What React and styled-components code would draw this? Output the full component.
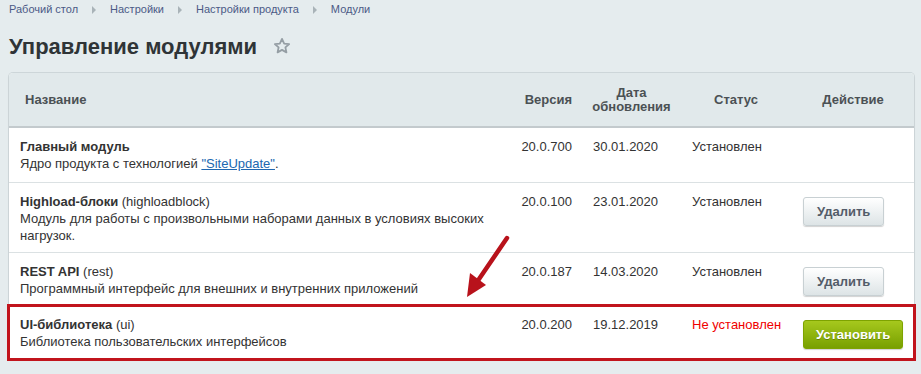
import React from 'react';
import styled, { createGlobalStyle } from 'styled-components';

const GlobalStyle = createGlobalStyle`
  html, body {
    margin: 0;
    padding: 0;
    background: #e5ecee;
    font-family: "Liberation Sans", Arial, sans-serif;
    overflow: hidden;
  }
`

const Page = styled.div`
  position: relative;
  padding: 3px 7px 0 9px;
  height: 374px;
  box-sizing: border-box;
`

const Breadcrumbs = styled.div`
  display: flex;
  align-items: center;
  font-size: 11px;
  line-height: 13px;
  color: #4b5a86;
`

const Sep = styled.span`
  width: 0;
  height: 0;
  margin: 0 14px 0 14px;
  border-top: 4px solid transparent;
  border-bottom: 4px solid transparent;
  border-left: 4px solid #a9b3b8;
`

const TitleRow = styled.div`
  display: flex;
  align-items: center;
  margin-top: 16px;
  height: 30px;
`

const Title = styled.h1`
  margin: 0;
  font-size: 22px;
  font-weight: bold;
  color: #2f3437;
  line-height: 30px;
`

const Star = styled.svg`
  margin-left: 16px;
  margin-top: -2px;
`

const Panel = styled.div`
  margin-top: 11px;
  width: 905px;
  background: #fff;
  border-radius: 4px 4px 0 0;
  box-shadow: 0 0 0 1px rgba(190, 200, 204, 0.6), 0 1px 2px rgba(0, 0, 0, 0.08);
`

const Table = styled.table`
  width: 905px;
  border-collapse: collapse;
  table-layout: fixed;
  font-size: 13px;
  color: #333;
`

const Head = styled.th`
  height: 53px;
  padding: 0 ${p => p.$pad || 0}px;
  background: #e1e9eb;
  border-bottom: 2px solid #c3cacd;
  font-weight: bold;
  color: #4b5154;
  line-height: 14px;
  text-align: ${p => p.$align || 'center'};
  vertical-align: middle;
  &:first-child { border-top-left-radius: 4px; }
  &:last-child { border-top-right-radius: 4px; }
`

const Row = styled.tr`
  border-bottom: 1px solid #dbe1e3;
  ${p => p.$marked && `
    outline: 3px solid #c1141c;
    outline-offset: -1px;
  `}
`

const Cell = styled.td`
  height: ${p => p.$tall ? 36 : 0}px;
  padding: 10px ${p => p.$pr || 10}px 8px ${p => p.$pl || 10}px;
  vertical-align: top;
  line-height: 17px;
  text-align: ${p => p.$align || 'left'};
  color: ${p => p.$red ? '#f00000' : '#333'};
`

const Name = styled.b`
  color: #333;
`

const Link = styled.a`
  color: #2067b0;
  text-decoration: underline;
`

const Button = styled.button`
  margin-top: 4px;
  height: 29px;
  padding: 0 ${p => (p.$green ? 12 : 13)}px;
  font-family: inherit;
  font-size: 13px;
  font-weight: bold;
  border-radius: 3px;
  cursor: pointer;
  color: ${p => (p.$green ? '#fff' : '#535c69')};
  text-shadow: ${p => (p.$green ? '0 1px rgba(0,0,0,0.25)' : 'none')};
  border: 1px solid ${p => (p.$green ? '#7ea300' : '#c8d0d3')};
  background: ${p => (p.$green
    ? 'linear-gradient(#a6c81d, #78a000)'
    : 'linear-gradient(#ffffff, #dde4e6)')};
  box-shadow: 0 1px 1px rgba(0, 0, 0, 0.18);
`

const Arrow = styled.svg`
  position: absolute;
  left: 0;
  top: 0;
  pointer-events: none;
`

const modules = [
  {
    name: 'Главный модуль',
    desc: <>Ядро продукта с технологией <Link href="#">"SiteUpdate"</Link>.</>,
    version: '20.0.700',
    date: '30.01.2020',
    status: 'Установлен',
    tall: true,
  },
  {
    name: 'Highload-блоки',
    id: 'highloadblock',
    desc: 'Модуль для работы с произвольными наборами данных в условиях высоких нагрузок.',
    version: '20.0.100',
    date: '23.01.2020',
    status: 'Установлен',
    action: 'remove',
  },
  {
    name: 'REST API',
    id: 'rest',
    desc: 'Программный интерфейс для внешних и внутренних приложений',
    version: '20.0.187',
    date: '14.03.2020',
    status: 'Установлен',
    action: 'remove',
  },
  {
    name: 'UI-библиотека',
    id: 'ui',
    desc: 'Библиотека пользовательских интерфейсов',
    version: '20.0.200',
    date: '19.12.2019',
    status: 'Не установлен',
    action: 'install',
    marked: true,
  },
];

export default function App() {
  return (
    <Page>
      <GlobalStyle />
      <Breadcrumbs>
        <span>Рабочий стол</span>
        <Sep />
        <span>Настройки</span>
        <Sep />
        <span>Настройки продукта</span>
        <Sep />
        <span>Модули</span>
      </Breadcrumbs>
      <TitleRow>
        <Title>Управление модулями</Title>
        <Star width="18" height="18" viewBox="0 0 24 24">
          <path
            d="M12 2.5l2.9 6.2 6.6.7-5 4.5 1.4 6.6L12 17.2l-5.9 3.3 1.4-6.6-5-4.5 6.6-.7z"
            fill="none"
            stroke="#959ea4"
            strokeWidth="2.4"
            strokeLinejoin="round"
          />
        </Star>
      </TitleRow>
      <Panel>
        <Table>
          <colgroup>
            <col style={{ width: 496 }} />
            <col style={{ width: 78 }} />
            <col style={{ width: 97 }} />
            <col style={{ width: 112 }} />
            <col style={{ width: 122 }} />
          </colgroup>
          <thead>
            <tr>
              <Head $align="left" $pad={16}>Название</Head>
              <Head $align="right" $pad={11}>Версия</Head>
              <Head>Дата<br />обновления</Head>
              <Head>Статус</Head>
              <Head>Действие</Head>
            </tr>
          </thead>
          <tbody>
            {modules.map(m => (
              <Row key={m.name} $marked={m.marked}>
                <Cell $pl={11} $pr={20} $tall={m.tall}>
                  <Name>{m.name}</Name>{m.id && ` (${m.id})`}
                  <br />
                  {m.desc}
                </Cell>
                <Cell $align="right" $pr={11}>{m.version}</Cell>
                <Cell>{m.date}</Cell>
                <Cell $pl={12} $red={m.status === 'Не установлен'}>{m.status}</Cell>
                <Cell $pl={11}>
                  {m.action === 'remove' && <Button>Удалить</Button>}
                  {m.action === 'install' && <Button $green>Установить</Button>}
                </Cell>
              </Row>
            ))}
          </tbody>
        </Table>
      </Panel>
      <Arrow width="921" height="374">
        <line x1="507" y1="238" x2="477" y2="282" stroke="#b8121b" strokeWidth="4.5" strokeLinecap="round" />
        <polygon points="467,297 486,285 470,273" fill="#b8121b" />
      </Arrow>
    </Page>
  );
}
